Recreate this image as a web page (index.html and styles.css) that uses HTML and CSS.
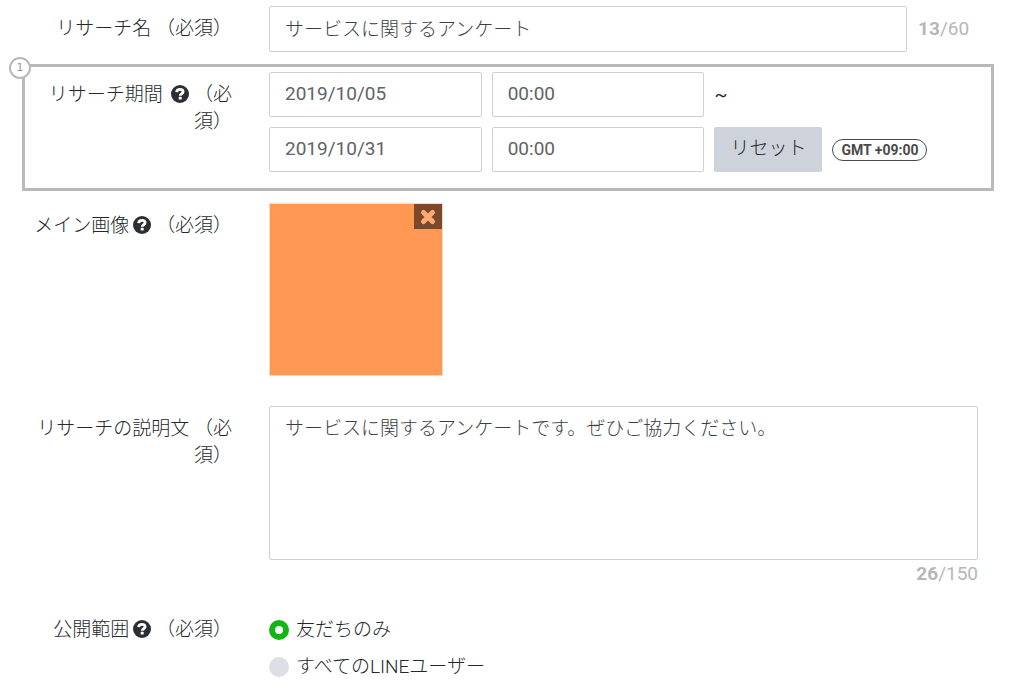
FILE: index.html
```html
<!DOCTYPE html>
<html lang="ja">
<head>
    <meta charset="UTF-8">
    <meta name="viewport" content="width=device-width, initial-scale=1.0">
    <title>リサーチ</title>
    <link rel="stylesheet" href="styles.css">
</head>
<body>
    <!-- shared icons -->
    <svg class="sprite" aria-hidden="true">
        <symbol id="help" viewBox="0 0 18 18">
            <circle cx="9" cy="9" r="9" fill="#2b2e33"/>
            <path d="M5.6 7.2C5.8 5.2 7.1 4.4 9 4.4c1.8 0 3.1 .9 3.1 2.4 0 2-2.8 1.9-2.9 3.9" fill="none" stroke="#fff" stroke-width="2.8"/>
            <rect x="7.7" y="11.8" width="3" height="2.8" rx="0.6" fill="#fff"/>
        </symbol>
    </svg>

    <form class="research-form">
        <!-- name -->
        <div class="row">
            <label class="row-label" for="name">リサーチ名 （必須）</label>
            <div class="row-body name-line">
                <input class="field" type="text" id="name" value="サービスに関するアンケート">
                <span class="counter"><b>13</b>/60</span>
            </div>
        </div>

        <!-- period -->
        <div class="row framed">
            <span class="step">1</span>
            <label class="row-label" for="start-date">リサーチ期間 <svg class="help"><use href="#help"/></svg> （必須）</label>
            <div class="row-body period">
                <div class="period-line">
                    <input class="field" type="text" id="start-date" value="2019/10/05">
                    <input class="field" type="text" aria-label="開始時刻" value="00:00">
                    <span class="tilde">~</span>
                </div>
                <div class="period-line">
                    <input class="field" type="text" aria-label="終了日" value="2019/10/31">
                    <input class="field" type="text" aria-label="終了時刻" value="00:00">
                    <button class="reset" type="button">リセット</button>
                    <span class="timezone">GMT +09:00</span>
                </div>
            </div>
        </div>

        <!-- main image -->
        <div class="row">
            <div class="row-label">メイン画像<svg class="help"><use href="#help"/></svg> （必須）</div>
            <div class="row-body">
                <div class="thumb">
                    <button class="thumb-remove" type="button" aria-label="削除">
                        <svg width="18" height="18" viewBox="0 0 18 18">
                            <path d="M4.5 4.5l9 9M13.5 4.5l-9 9" stroke="#ffaa70" stroke-width="5" stroke-linecap="round"/>
                        </svg>
                    </button>
                </div>
            </div>
        </div>

        <!-- description -->
        <div class="row spaced">
            <label class="row-label" for="description">リサーチの説明文 （必須）</label>
            <div class="row-body description">
                <textarea class="field" id="description">サービスに関するアンケートです。ぜひご協力ください。</textarea>
                <span class="counter"><b>26</b>/150</span>
            </div>
        </div>

        <!-- visibility -->
        <div class="row visibility">
            <div class="row-label">公開範囲<svg class="help"><use href="#help"/></svg> （必須）</div>
            <div class="row-body options">
                <label class="option"><input type="radio" name="scope" checked>友だちのみ</label>
                <label class="option"><input type="radio" name="scope">すべてのLINEユーザー</label>
            </div>
        </div>
    </form>
</body>
</html>
```

FILE: styles.css
```css
* {
    box-sizing: border-box;
}

body {
    margin: 0;
    background-color: #fff;
    color: #24272b;
    font-family: Roboto, "Noto Sans CJK JP", sans-serif;
    font-size: 19px;
    line-height: 27px;
}

input,
textarea,
button {
    font: inherit;
    color: inherit;
}

.sprite {
    position: absolute;
    width: 0;
    height: 0;
}

.research-form {
    padding-top: 6px;
}

.row {
    display: grid;
    grid-template-columns: 207px 1fr;
    column-gap: 37px;
    padding: 0 42px 0 25px;
}

.row-label {
    padding-top: 9px;
    text-align: right;
    font-weight: 300;
}

.help {
    width: 18px;
    height: 18px;
    margin-left: 4px;
    vertical-align: -2px;
}

.field {
    display: block;
    height: 46px;
    padding: 0 15px 3px;
    border: 1px solid #d0d0d2;
    border-radius: 2px;
    background-color: #fff;
    color: #3c3f43;
    font-weight: 300;
    outline: none;
}

.field:focus {
    border-color: #13b413;
}

.counter {
    color: #b4b7b9;
}

.name-line {
    display: flex;
    align-items: center;
    gap: 11px;
}

.name-line .field {
    width: 90%;
}

.name-line .counter {
    padding-bottom: 2px;
}

/* highlighted row */
.framed {
    position: relative;
    margin: 12px 26px 12px 22px;
    padding: 5px 13px 16px 0;
    border: 3px solid #b9b9b9;
}

.step {
    position: absolute;
    top: -10px;
    left: -16px;
    width: 22px;
    height: 22px;
    border: 2px solid #b9b9b9;
    border-radius: 50%;
    background-color: #fff;
    color: #999;
    font: 11px/18px "DejaVu Sans", sans-serif;
    text-align: center;
}

.period {
    display: grid;
    gap: 10px;
}

.period-line {
    display: flex;
    align-items: center;
    gap: 10px;
}

.period-line .field {
    width: 30%;
    height: 45px;
    padding-bottom: 2px;
    color: #606367;
    font-weight: 400;
}

.reset {
    height: 45px;
    padding: 0 16px 2px;
    border: 0;
    border-radius: 2px;
    background-color: #cdd2db;
    font-weight: 300;
    white-space: nowrap;
}

.timezone {
    padding: 0 8px;
    border: 1px solid #4a4a4a;
    border-radius: 11px;
    color: #4a4a4a;
    font-size: 14px;
    font-weight: 700;
    line-height: 20px;
    white-space: nowrap;
}

.thumb {
    position: relative;
    width: 174px;
    height: 173px;
    border: 1px solid #f3d9c8;
    background-color: #ff9852;
}

.thumb-remove {
    position: absolute;
    top: 0;
    right: 0;
    display: flex;
    align-items: center;
    justify-content: center;
    width: 28px;
    height: 25px;
    padding: 0;
    border: 0;
    background-color: #7b482a;
}

.spaced {
    margin-top: 30px;
}

.description {
    display: flex;
    flex-direction: column;
}

.description .field {
    height: 154px;
    padding-top: 8px;
    resize: none;
}

.description .counter {
    align-self: flex-end;
}

.visibility {
    margin-top: 20px;
}

.options {
    display: grid;
    gap: 10px;
    justify-items: start;
    padding-top: 9px;
}

.option {
    display: flex;
    align-items: center;
    gap: 7px;
    font-weight: 300;
}

.option input {
    appearance: none;
    width: 20px;
    height: 20px;
    margin: 0;
    border-radius: 50%;
    background-color: #dcdfe6;
}

.option input:checked {
    border: 6px solid #13b413;
    background-color: #fff;
}
```
